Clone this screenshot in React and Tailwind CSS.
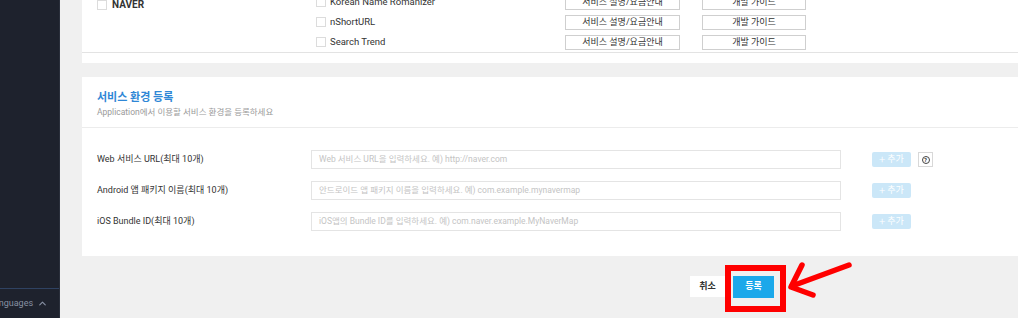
import { ChevronUp } from "lucide-react";

const services = ["Korean Name Romanizer", "nShortURL", "Search Trend"];

const envRows = [
  {
    label: "Web 서비스 URL(최대 10개)",
    placeholder: "Web 서비스 URL을 입력하세요. 예) http://naver.com",
    help: true,
  },
  {
    label: "Android 앱 패키지 이름(최대 10개)",
    placeholder: "안드로이드 앱 패키지 이름을 입력하세요. 예) com.example.mynavermap",
  },
  {
    label: "iOS Bundle ID(최대 10개)",
    placeholder: "iOS앱의 Bundle ID를 입력하세요. 예) com.naver.example.MyNaverMap",
  },
];

export default function App() {
  return (
    <div
      className="w-[1018px] h-[318px] flex overflow-hidden"
      style={{ fontFamily: 'Roboto, "Noto Sans CJK KR", sans-serif' }}
    >
      <Sidebar />

      <main className="relative flex-1 bg-[#f0f0f0] pl-[22px] overflow-hidden">
        {/* API list card, scrolled so only its bottom rows show */}
        <div className="bg-white -mt-[8px]">
          <div className="flex">
            <div className="w-[234px] pl-[15px] pt-[8px]">
              <label className="flex items-center gap-[5px]">
                <Checkbox />
                <span className="text-[10px] font-bold text-[#333] leading-none">NAVER</span>
              </label>
            </div>
            <div className="flex-1">
              {services.map((s) => (
                <ServiceRow key={s} name={s} />
              ))}
            </div>
          </div>
          <div className="h-[11px] border-t border-[#e3e3e3]" />
        </div>

        {/* 서비스 환경 등록 */}
        <section className="bg-white mt-[14px]">
          <div className="px-[15px] pt-[13px] pb-[8px] border-b border-[#ececec]">
            <h2 className="text-[11px] font-bold text-[#2f87d6] leading-[16px]">서비스 환경 등록</h2>
            <p className="text-[8.5px] text-[#9a9a9a] -mt-[1px] leading-[14px]">
              Application에서 이용할 서비스 환경을 등록하세요
            </p>
          </div>
          <div className="pl-[15px] pt-[22px] pb-[25px] flex flex-col gap-[12px]">
            {envRows.map((r) => (
              <EnvRow key={r.label} {...r} />
            ))}
          </div>
        </section>

        <div className="flex pl-[608px] mt-[20px] gap-[8px]">
          <button className="w-[35px] h-[21px] bg-white text-[9px] font-bold text-[#333]">취소</button>
          <button className="w-[41px] h-[22px] bg-[#1ba8ea] text-[9px] font-bold text-white">등록</button>
        </div>

        {/* annotation */}
        <div className="absolute left-[665px] top-[265px] w-[61px] h-[47px] border-[6px] border-[#ff0000]" />
        <svg className="absolute left-[725px] top-[255px]" width="75" height="50" viewBox="0 0 75 50">
          <g stroke="#ff0000" strokeWidth="5.5" strokeLinecap="round" strokeLinejoin="round" fill="none">
            <line x1="64" y1="10" x2="7" y2="31" />
            <polyline points="17,10 6,32 28,40" />
          </g>
        </svg>
      </main>
    </div>
  );
}

function Sidebar() {
  return (
    <aside className="w-[60px] shrink-0 bg-[#1e222d] border-r border-[#2a2f3b] flex flex-col justify-end">
      <div className="border-t border-[#2f4262] h-[30px] flex items-center overflow-hidden">
        <span className="-ml-[11px] text-[9px] text-[#8790a3] whitespace-nowrap">Languages</span>
        <ChevronUp className="ml-[4px] shrink-0" size={11} color="#8790a3" strokeWidth={2.5} />
      </div>
    </aside>
  );
}

function Checkbox() {
  return <span className="inline-block w-[10px] h-[10px] border border-[#dcdcdc] bg-white shrink-0" />;
}

function ServiceRow({ name }) {
  return (
    <div className="h-[20px] flex items-center">
      <div className="w-[249px] flex items-center gap-[4px]">
        <Checkbox />
        <span className="text-[9.5px] text-[#333]">{name}</span>
      </div>
      <button className="w-[115px] h-[15px] border border-[#cfcfcf] bg-white text-[9px] text-[#333] leading-none">
        서비스 설명/요금안내
      </button>
      <button className="ml-[22px] w-[104px] h-[15px] border border-[#cfcfcf] bg-white text-[9px] text-[#333] leading-none">
        개발 가이드
      </button>
    </div>
  );
}

function EnvRow({ label, placeholder, help }) {
  return (
    <div className="flex items-center h-[19px]">
      <div className="w-[214px] text-[9px] text-[#333]">{label}</div>
      <div className="w-[530px] h-[19px] border border-[#e4e4e4] flex items-center px-[7px]">
        <span className="text-[8.5px] text-[#c4c4c4] whitespace-nowrap">{placeholder}</span>
      </div>
      <button className="ml-[31px] w-[39px] h-[15px] rounded-[2px] bg-[#cbe7f8] text-[9px] text-white flex items-center justify-center gap-[2px] leading-none">
        <span className="text-[11px] font-light">+</span>
        <span>추가</span>
      </button>
      {help && (
        <span className="ml-[7px] w-[15px] h-[15px] border border-[#d8d8d8] bg-white flex items-center justify-center">
          <span className="w-[8px] h-[8px] rounded-full border border-[#444] text-[6px] font-bold leading-none flex items-center justify-center text-[#333]">?</span>
        </span>
      )}
    </div>
  );
}
